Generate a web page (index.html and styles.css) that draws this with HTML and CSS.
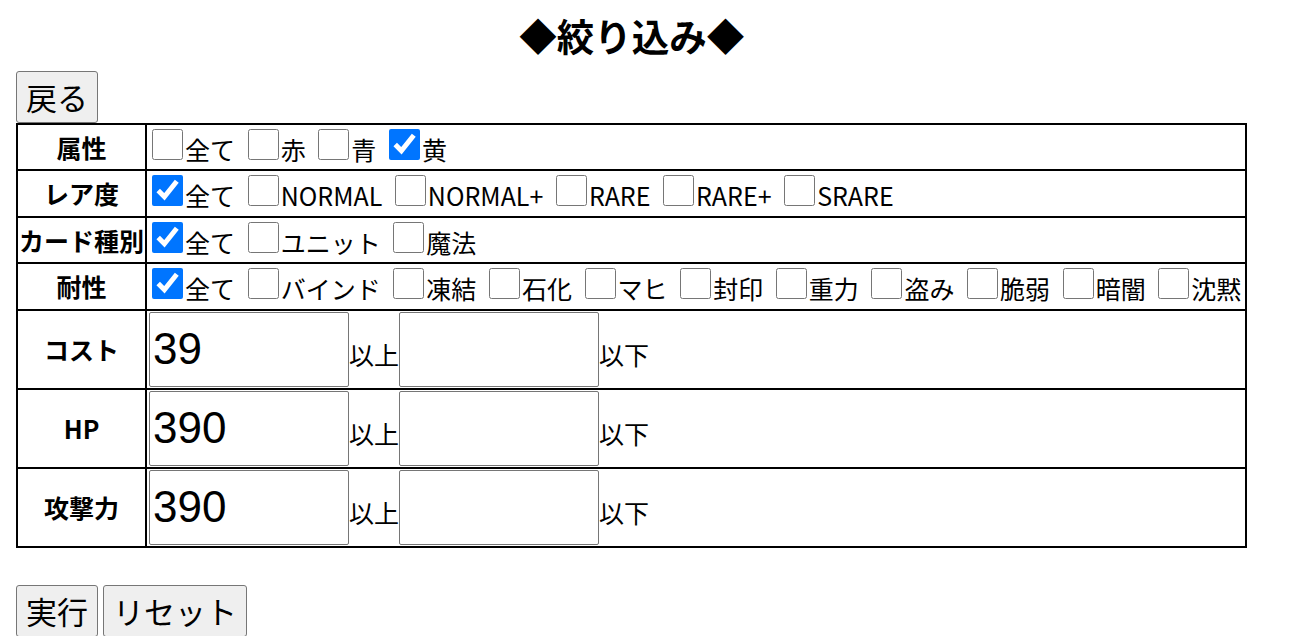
FILE: index.html
```html
<!DOCTYPE html>
<html lang="ja">
<head>
    <meta charset="UTF-8">
    <meta name="viewport" content="width=device-width, initial-scale=1.0">
    <title>絞り込み</title>
    <link rel="stylesheet" href="styles.css">
</head>
<body>

<div class="panel">
    <h1 class="title">◆絞り込み◆</h1>

    <div class="actions">
        <button class="btn" type="button">戻る</button>
    </div>

    <form class="search">
        <table class="filter">
            <tr class="check">
                <th>属性</th>
                <td>
                    <label><input type="checkbox">全て</label>
                    <label><input type="checkbox">赤</label>
                    <label><input type="checkbox">青</label>
                    <label><input type="checkbox" checked>黄</label>
                </td>
            </tr>
            <tr class="check">
                <th>レア度</th>
                <td>
                    <label><input type="checkbox" checked>全て</label>
                    <label><input type="checkbox">NORMAL</label>
                    <label><input type="checkbox">NORMAL+</label>
                    <label><input type="checkbox">RARE</label>
                    <label><input type="checkbox">RARE+</label>
                    <label><input type="checkbox">SRARE</label>
                </td>
            </tr>
            <tr class="check">
                <th>カード種別</th>
                <td>
                    <label><input type="checkbox" checked>全て</label>
                    <label><input type="checkbox">ユニット</label>
                    <label><input type="checkbox">魔法</label>
                </td>
            </tr>
            <tr class="check">
                <th>耐性</th>
                <td>
                    <label><input type="checkbox" checked>全て</label>
                    <label><input type="checkbox">バインド</label>
                    <label><input type="checkbox">凍結</label>
                    <label><input type="checkbox">石化</label>
                    <label><input type="checkbox">マヒ</label>
                    <label><input type="checkbox">封印</label>
                    <label><input type="checkbox">重力</label>
                    <label><input type="checkbox">盗み</label>
                    <label><input type="checkbox">脆弱</label>
                    <label><input type="checkbox">暗闇</label>
                    <label><input type="checkbox">沈黙</label>
                </td>
            </tr>
            <tr class="range">
                <th>コスト</th>
                <td><input class="num" type="text" value="39">以上<input class="num" type="text">以下</td>
            </tr>
            <tr class="range">
                <th>HP</th>
                <td><input class="num" type="text" value="390">以上<input class="num" type="text">以下</td>
            </tr>
            <tr class="range">
                <th>攻撃力</th>
                <td><input class="num" type="text" value="390">以上<input class="num" type="text">以下</td>
            </tr>
        </table>

        <div class="actions bottom">
            <button class="btn" type="submit">実行</button>
            <button class="btn" type="reset">リセット</button>
        </div>
    </form>
</div>

</body>
</html>
```

FILE: styles.css
```css
/* ページ全体 */
body {
    margin: 0 16px;
    font-family: "Noto Sans CJK JP", "Noto Sans", sans-serif;
    color: #000;
    background: #fff;
}
.panel {
    width: fit-content;
}
.title {
    margin: 7px 0 8.7px;
    font-size: 37.5px;
    font-weight: bold;
    text-align: center;
}

/* ボタン */
.actions {
    display: flex;
    gap: 5px;
}
.actions.bottom {
    margin-top: 37px;
}
.btn {
    font-family: "Noto Sans CJK JP", sans-serif;
    font-size: 31px;
    line-height: 44px;
    padding: 3px 9px;
    background: #efefef;
    color: #000;
    border: 1px solid #767676;
    border-radius: 3px;
}

/* 絞り込みテーブル */
.filter {
    border-collapse: collapse;
    font-size: 25px;
}
.filter th, .filter td {
    border: 2px solid #000;
    padding: 1px;
    white-space: nowrap;
}
.filter th {
    font-weight: bold;
    text-align: center;
}
.filter td {
    text-align: left;
}
.check td {
    height: 42.5px;
}
.filter label {
    margin-right: 3px;
}
.filter input[type="checkbox"] {
    width: 31px;
    height: 31px;
    margin: 2px 2px 2px 4px;
}

/* 数値入力 */
.range td {
    padding-left: 2px;
}
.num {
    box-sizing: border-box;
    width: 200px;
    height: 75px;
    margin: 0;
    padding: 1px 3px;
    font-family: "Liberation Sans", Arial, sans-serif;
    font-size: 44px;
    border: 1px solid #767676;
    border-radius: 2px;
}
```
